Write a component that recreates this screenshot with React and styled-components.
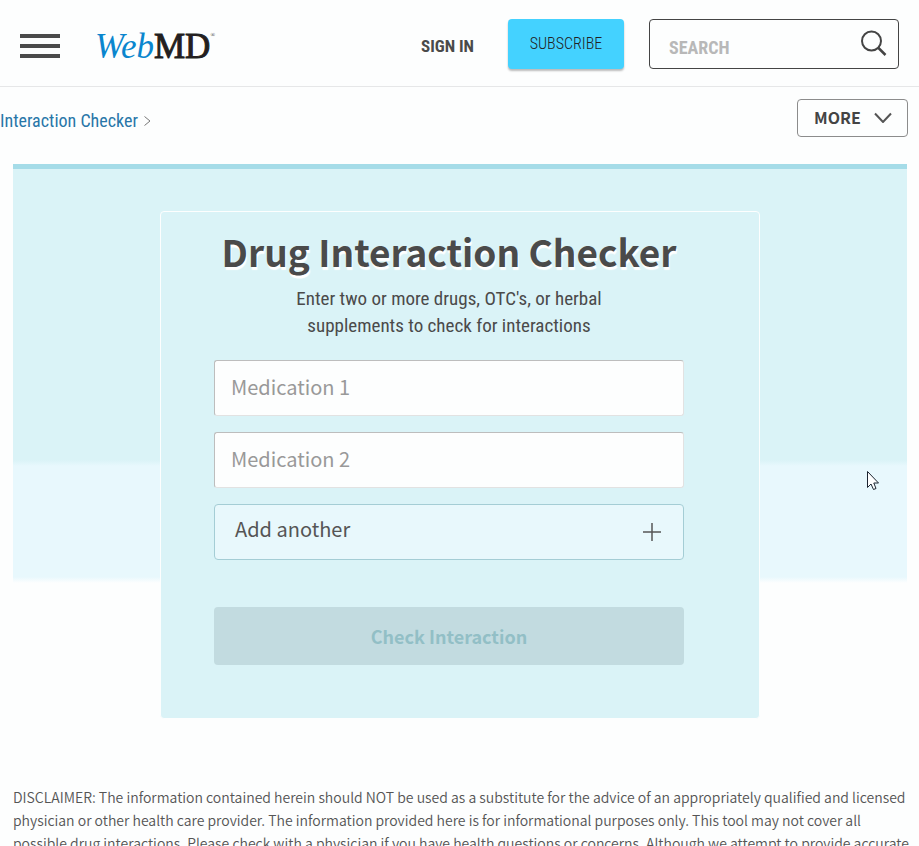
import React, {useState} from "react";
import styled, {createGlobalStyle} from "styled-components";

const sans = `"Source Sans Pro", "Noto Sans CJK SC", sans-serif`;
const condensed = `"Roboto Condensed", "Liberation Sans Narrow", Roboto, sans-serif`;

export default function App() {
    const [meds, setMeds] = useState(["", ""]);

    const change = (index, value) => {
        setMeds(meds.map((med, i) => i === index ? value : med));
    };

    return (
        <>
            <GlobalStyle/>
            <Header>
                <MenuButton type="button" aria-label="Menu">
                    <span></span>
                    <span></span>
                    <span></span>
                </MenuButton>
                <Logo href="#"><em>Web</em>MD<sup>®</sup></Logo>
                <SignIn href="#">SIGN IN</SignIn>
                <Subscribe type="button">SUBSCRIBE</Subscribe>
                <SearchBox>
                    <input type="text" placeholder="SEARCH" aria-label="Search"/>
                    <button type="button" aria-label="Submit search">
                        <svg width="28" height="28" viewBox="0 0 28 28" fill="none" stroke="#444" strokeWidth="2">
                            <circle cx="12.5" cy="11" r="9.5"/>
                            <path d="M19 17.5L26.5 25" strokeWidth="2.5"/>
                        </svg>
                    </button>
                </SearchBox>
            </Header>
            <SubNav>
                <Breadcrumb aria-label="Breadcrumb">
                    <a href="#">Interaction Checker</a>
                    <svg width="8" height="12" viewBox="0 0 8 12" fill="none" stroke="#777">
                        <path d="M0.5 2.5L6 7L0.5 11.5"/>
                    </svg>
                </Breadcrumb>
                <MoreButton type="button">
                    MORE
                    <svg width="18" height="12" viewBox="0 0 18 12" fill="none" stroke="#555" strokeWidth="2">
                        <path d="M1 2.5L9 11L17 2.5"/>
                    </svg>
                </MoreButton>
            </SubNav>
            <main>
                <Hero>
                    <Card onSubmit={(e) => e.preventDefault()}>
                        <h1>Drug Interaction Checker</h1>
                        <p>Enter two or more drugs, OTC's, or herbal<br/>supplements to check for interactions</p>
                        <Fields>
                            {meds.map((med, i) => (
                                <MedInput
                                    key={i}
                                    type="text"
                                    aria-label={`Medication ${i + 1}`}
                                    placeholder={`Medication ${i + 1}`}
                                    value={med}
                                    onChange={(e) => change(i, e.target.value)}
                                />
                            ))}
                            <AddButton type="button" onClick={() => setMeds([...meds, ""])}>
                                Add another
                                <svg width="18" height="18" viewBox="0 0 18 18" stroke="#555" strokeWidth="1.5">
                                    <path d="M9 0V18M0 9H18"/>
                                </svg>
                            </AddButton>
                        </Fields>
                        <CheckButton type="submit" disabled={meds.filter(Boolean).length < 2}>
                            Check Interaction
                        </CheckButton>
                    </Card>
                    <Pointer width="12" height="20" viewBox="0 0 12 20">
                        <path d="M0.5 0.5V16.5L4 13L6.5 18.5L9 17.5L6.8 12H11.5Z" fill="#fff" stroke="#1b2430"/>
                    </Pointer>
                </Hero>
                <Disclaimer>
                    DISCLAIMER: The information contained herein should NOT be used as a substitute for the advice of an
                    appropriately qualified and licensed physician or other health care provider. The information
                    provided here is for informational purposes only. This tool may not cover all possible drug
                    interactions. Please check with a physician if you have health questions or concerns. Although we
                    attempt to provide accurate
                </Disclaimer>
            </main>
        </>
    );
}

const GlobalStyle = createGlobalStyle`
    * {
        box-sizing: border-box;
    }

    body {
        margin: 0;
        background-color: #fdfefe;
        color: #4a4a4a;
        font-family: ${sans};
    }

    a {
        text-decoration: none;
    }

    button {
        cursor: pointer;
    }
`;

const Header = styled.header`
    display: flex;
    align-items: center;
    height: 87px;
    padding: 2px 20px 0;
    border-bottom: 1px solid #e6e7e8;
`;

const MenuButton = styled.button`
    display: flex;
    flex-direction: column;
    gap: 6px;
    width: 40px;
    padding: 4px 0 0;
    border: none;
    background-color: transparent;

    span {
        height: 4px;
        background-color: #4a4a4a;
    }
`;

const Logo = styled.a`
    display: flex;
    margin-left: 35px;
    padding-top: 6px;
    color: #231f20;
    font-family: "Liberation Serif", serif;
    font-size: 35px;
    line-height: 40px;
    -webkit-text-stroke: 1px;

    em {
        color: #0a86ce;
        -webkit-text-stroke: 0;
    }

    sup {
        font-size: 6px;
        line-height: 16px;
        -webkit-text-stroke: 0;
    }
`;

const SignIn = styled.a`
    margin-left: auto;
    padding-top: 4px;
    color: #4a4a4a;
    font-family: ${condensed};
    font-size: 17px;
    font-weight: 700;
`;

const Subscribe = styled.button`
    width: 116px;
    height: 50px;
    margin: 0 25px 0 34px;
    padding: 0 0 2px;
    border: none;
    border-radius: 4px;
    background-color: #44d2ff;
    box-shadow: 0 2px 2px #bbb;
    color: #222;
    font-family: ${condensed};
    font-size: 16px;
    font-weight: 300;
`;

const SearchBox = styled.div`
    display: flex;
    align-items: center;
    width: 250px;
    height: 50px;
    padding: 0 11px 0 19px;
    border: 1px solid #444;
    border-radius: 4px;

    input {
        flex: 1;
        min-width: 0;
        padding: 6px 0 0;
        border: none;
        outline: none;
        background-color: transparent;
        font-family: ${condensed};
        font-size: 18px;
        font-weight: 700;
    }

    input::placeholder {
        color: #b8b8b8;
    }

    button {
        display: flex;
        padding: 0;
        border: none;
        background-color: transparent;
    }
`;

const SubNav = styled.div`
    display: flex;
    align-items: center;
    justify-content: space-between;
    padding: 12px 11px 27px 0;
`;

const Breadcrumb = styled.nav`
    display: flex;
    align-items: center;
    gap: 6px;
    padding-top: 4px;
    font-family: ${condensed};
    font-size: 18px;

    a {
        color: #2876a8;
    }
`;

const MoreButton = styled.button`
    display: flex;
    align-items: center;
    justify-content: space-between;
    width: 111px;
    height: 38px;
    padding: 0 15px 2px 16px;
    border: 1px solid #8c8c8c;
    border-radius: 4px;
    background-color: transparent;
    color: #444;
    font-family: ${sans};
    font-size: 16px;
    font-weight: 700;
`;

const Hero = styled.section`
    position: relative;
    margin: 0 12px 0 13px;
    padding-top: 42px;
    border-top: 5px solid #a5dce8;
    background: linear-gradient(#daf3f7 291px, #e8f8fd 297px, #e8f8fd 408px, #fdfefe 414px);
`;

const Card = styled.form`
    max-width: 600px;
    margin: 0 auto;
    padding: 9px 75px 53px 53px;
    border: 1px solid #fdfefe;
    border-radius: 4px;
    background-color: #daf3f7;
    text-align: center;

    h1 {
        margin: 0 0 4px;
        font-size: 37px;
        line-height: 60px;
        font-weight: 700;
        text-shadow: 1px 3px 1px #fff;
        white-space: nowrap;
    }

    p {
        margin: 0 0 21px;
        font-family: ${condensed};
        font-size: 19px;
        line-height: 27px;
    }
`;

const Fields = styled.div`
    display: flex;
    flex-direction: column;
    gap: 16px;
    margin-bottom: 47px;
`;

const MedInput = styled.input`
    width: 100%;
    height: 56px;
    padding: 0 16px 4px;
    border: 1px solid;
    border-color: #bdbdbd #e2e2e2 #e2e2e2 #bdbdbd;
    border-radius: 3px;
    background-color: #fdfefe;
    color: #4a4a4a;
    font-family: ${sans};
    font-size: 20px;

    &::placeholder {
        color: #999;
    }
`;

const AddButton = styled.button`
    display: flex;
    align-items: center;
    justify-content: space-between;
    height: 56px;
    padding: 0 22px 8px 20px;
    border: 1px solid #a4cdd5;
    border-radius: 4px;
    background-color: #e8f8fc;
    color: #555;
    font-family: ${sans};
    font-size: 20px;

    svg {
        margin-top: 8px;
    }
`;

const CheckButton = styled.button`
    width: 100%;
    height: 58px;
    border: none;
    border-radius: 4px;
    background-color: #c2dbe0;
    color: #92bfc6;
    font-family: ${sans};
    font-size: 18px;
    font-weight: 700;
`;

const Pointer = styled.svg`
    position: absolute;
    top: 302px;
    right: 28px;
`;

const Disclaimer = styled.p`
    margin: 67px 0 0;
    padding: 0 6px 0 13px;
    color: #555;
    font-size: 14px;
    font-weight: 350;
    line-height: 23px;
`;
